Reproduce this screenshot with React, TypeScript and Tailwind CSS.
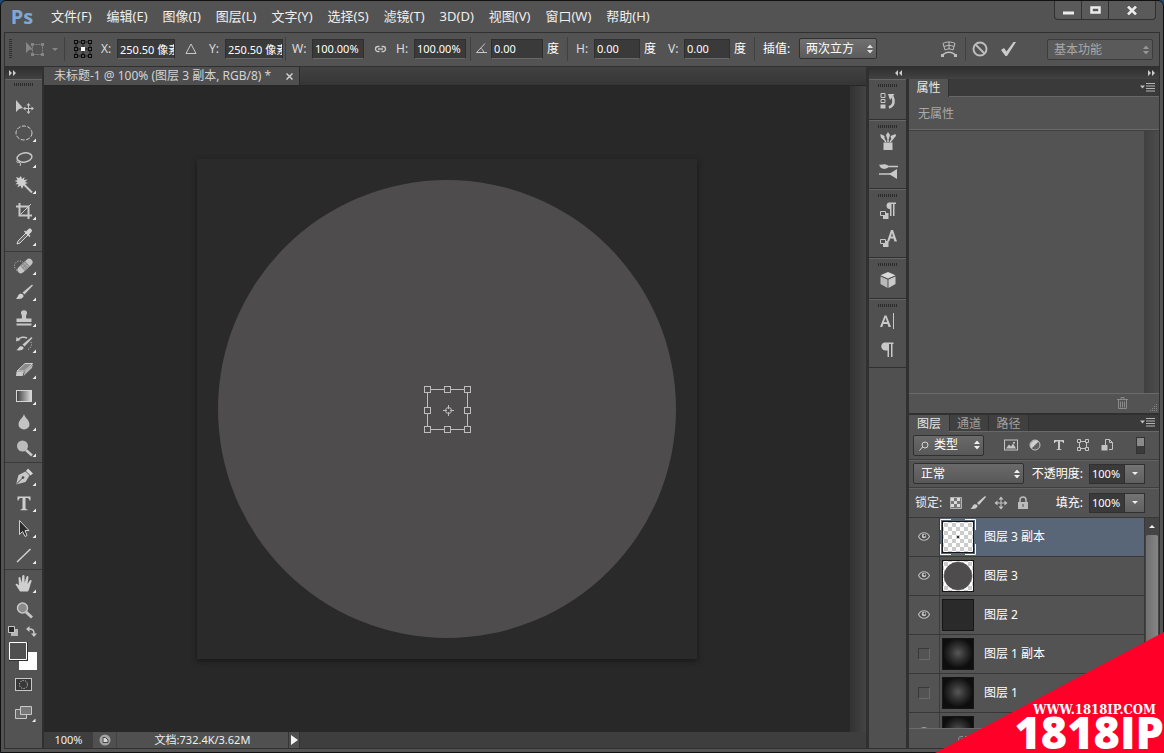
import { useState } from 'react';
import type { ReactNode } from 'react';
import clsx from 'clsx';

const MENUS = [
  '文件(F)',
  '编辑(E)',
  '图像(I)',
  '图层(L)',
  '文字(Y)',
  '选择(S)',
  '滤镜(T)',
  '3D(D)',
  '视图(V)',
  '窗口(W)',
  '帮助(H)',
];

type Tool = { name: string; icon: ReactNode; flyout?: boolean };

// Tool drawings share a 26x26 box, the flyout corner mark sits at its bottom right
const TOOL_GROUPS: Tool[][] = [
  [
    {
      name: '移动',
      flyout: false,
      icon: (
        <>
          <path d="M5 6v12l3-3 4-1z" fill="#c8c8c8" />
          <path d="M17.500 10v9M13 14.500h9" stroke="#c8c8c8" />
          <path d="M15.500 11.500l2-2.500 2 2.500zM15.500 17.500l2 2.500 2-2.500zM14.500 12.500L12 14.500l2.500 2zM20.500 12.500l2.500 2-2.500 2z" fill="#c8c8c8" />
        </>
      ),
    },
    {
      name: '椭圆选框',
      icon: <ellipse cx="13" cy="13" rx="8" ry="7" fill="none" stroke="#d0d0d0" strokeDasharray="4 1.500" />,
    },
    {
      name: '套索',
      icon: (
        <>
          <ellipse cx="13.500" cy="11.500" rx="7.500" ry="4.500" fill="none" stroke="#c8c8c8" strokeWidth="1.500" transform="rotate(-10 13.500 11.500)" />
          <path d="M7 14c-2 1-1.500 3 .5 2.500s1.500-2 0-2.500M8 16.500c2 .5 2 2 1 3.500" fill="none" stroke="#c8c8c8" />
        </>
      ),
    },
    {
      name: '魔棒',
      icon: (
        <>
          <path d="M10 4l1 3 2.500-2-.5 3 3.500-.5-2.500 2.500 3 1-3 1 1.500 3-3-1.500-1.500 3.500-1.500-3.500-3 2 1-3.500-3 .5 2-2.500-3-1 3-1-1.500-3 3 1z" fill="#cfcfcf" />
          <path d="M13.500 13l7.500 7.500" stroke="#c8c8c8" strokeWidth="2" />
        </>
      ),
    },
    {
      name: '裁剪',
      icon: (
        <>
          <path d="M8.500 5v12.500H21M5 8.500h12.500V21" fill="none" stroke="#c8c8c8" strokeWidth="2" />
          <path d="M9.500 16.500L20 6" stroke="#c8c8c8" />
        </>
      ),
    },
    {
      name: '吸管',
      icon: (
        <>
          <path d="M6 20l1-3 8-8 2 2-8 8z" fill="#686868" stroke="#d4d4d4" />
          <path d="M13 7.500l5.500 5.500 1-1-1.500-1.500 2.500-2.500c1.500-2-1-4.500-3-3L15 7.500 14 6.500z" fill="#d4d4d4" />
        </>
      ),
    },
  ],
  [
    {
      name: '修复画笔',
      icon: (
        <>
          <circle cx="8.500" cy="13" r="5" fill="none" stroke="#d0d0d0" strokeDasharray="1 1.600" />
          <g transform="rotate(-43 14 13)">
            <rect x="5" y="9.500" width="18" height="7" rx="3.500" fill="#c4c4c4" />
            <rect x="10.500" y="9.500" width="7" height="7" fill="#929292" />
            <path d="M12 11.500h1M15 11.500h1M12 14.500h1M15 14.500h1" stroke="#e2e2e2" />
          </g>
        </>
      ),
    },
    {
      name: '画笔',
      icon: (
        <>
          <path d="M21 5.500l1 1-8.500 9-2-2z" fill="#c8c8c8" />
          <path d="M4.500 19.500c2.500-.5 2-3 4-4.500 2-1 4.500.5 4 2.500-.8 2.500-5.500 3-8 2z" fill="#d0d0d0" />
        </>
      ),
    },
    {
      name: '图章',
      icon: (
        <path d="M5.500 18.500h15v2h-15zM5.500 13.500h5c1-1 .5-3-.5-5-1-4.500 7-4.500 6 0-1 2-1.500 4-.5 5h5V17h-15z" fill="#c8c8c8" />
      ),
    },
    {
      name: '历史记录画笔',
      icon: (
        <>
          <path d="M20.500 6l1 1-8 8.500-2-2z" fill="#c8c8c8" />
          <path d="M5 19c2.500-.5 2-2.500 4-3.500 2-.5 4 .5 3.500 2-1 2-5 2.500-7.500 1.500z" fill="#d0d0d0" />
          <path d="M7 9c2-3 6-3.500 9-2" fill="none" stroke="#c8c8c8" strokeWidth="1.500" />
          <path d="M5 10.500l.5-4.500 4 3z" fill="#c8c8c8" />
          <path d="M20 11c1 3 0 6-3 7.500" fill="none" stroke="#c8c8c8" strokeDasharray="1 1.500" />
        </>
      ),
    },
    {
      name: '橡皮擦',
      icon: (
        <>
          <path d="M6 14l8-7.500h7.500l-8 7.500z" fill="#8b8b8b" stroke="#d0d0d0" />
          <path d="M5.500 14.500H13l-1.500 4.500H5z" fill="#cacaca" />
          <path d="M14 14l8-7-1 4-8.500 8z" fill="#b4b4b4" />
        </>
      ),
    },
    {
      name: '渐变',
      icon: (
        <>
          <defs>
            <linearGradient id="toolGradient">
              <stop offset="0" stopColor="#3c3c3c" />
              <stop offset="1" stopColor="#dedede" />
            </linearGradient>
          </defs>
          <rect x="5.500" y="7.500" width="15" height="11" fill="url(#toolGradient)" stroke="#d5d5d5" />
        </>
      ),
    },
    {
      name: '模糊',
      icon: <path d="M13 5c1 4 5.500 6 5.500 10.500a5.500 5 0 0 1-11 0C7.500 11 12 9 13 5z" fill="#c4c4c4" />,
    },
    {
      name: '减淡',
      icon: (
        <>
          <circle cx="11.500" cy="11" r="5.500" fill="#bcbcbc" />
          <path d="M15 15l6 5.500" stroke="#c8c8c8" strokeWidth="2.500" />
        </>
      ),
    },
  ],
  [
    {
      name: '钢笔',
      icon: (
        <>
          <path d="M5 20.500l2.500-9.500 7-3.500 4 4-4 6.500z" fill="#c8c8c8" />
          <path d="M15 7l2-2.500 5 5-2.500 2z" fill="#d6d6d6" />
          <path d="M5 20.500l7-7" stroke="#4a4a4a" />
          <circle cx="12" cy="13.500" r="1.300" fill="#4a4a4a" />
        </>
      ),
    },
    {
      name: '文字',
      icon: (
        <path d="M6.500 6.500h13v4h-1c-.3-2-1-2.500-4-2.500v10c0 1 .6 1.300 2 1.500v.8h-7v-.8c1.400-.2 2-.5 2-1.500V8c-3 0-3.700.5-4 2.500h-1z" fill="#cfcfcf" />
      ),
    },
    {
      name: '路径选择',
      icon: <path d="M8.500 4.500v14l3-3 2.500 5 2-1-2-5h4z" fill="#2c2c2c" stroke="#d0d0d0" />,
    },
    { name: '直线', icon: <path d="M6 20L19.500 7" stroke="#cfcfcf" strokeWidth="1.500" /> },
  ],
  [
    {
      name: '抓手',
      icon: (
        <path d="M9 20.500c-1-2-2.500-4-4.500-7 .5-1.500 2-1 3.500 1L7.500 7c.2-1.500 1.800-1.500 2 0l1 5 .8-7c.4-1.500 2-1.300 2.200 0l.2 6.800 1.800-6c.5-1.300 2-.8 2 .5l-1 6.700 2.300-3.500c1-1 2.200-.3 1.700 1-1.500 3-1.500 7-3.500 10z" fill="#cfcfcf" />
      ),
    },
    {
      name: '缩放',
      flyout: false,
      icon: (
        <>
          <path d="M15 15l6 5.500" stroke="#c8c8c8" strokeWidth="3" />
          <circle cx="11.500" cy="11" r="5" fill="#8a8a8a" stroke="#c8c8c8" strokeWidth="1.500" />
        </>
      ),
    },
  ],
];

const DOCK_GROUPS: Tool[][] = [
  [
    {
      name: '历史记录',
      icon: (
        <>
          <path d="M6 5.500h4v4H6zM6 11.500h4v3H6z" fill="none" stroke="#c8c8c8" />
          <path d="M5.500 16.500h5v4h-5z" fill="#c8c8c8" />
          <path d="M14 19.500c5-2 5.500-6 3.500-11" fill="none" stroke="#c8c8c8" strokeWidth="2.500" />
          <path d="M13 6h6.500l-4.500 6z" fill="#c8c8c8" />
        </>
      ),
    },
  ],
  [
    {
      name: '画笔预设',
      icon: (
        <>
          <path d="M8.500 13.500h9V21h-9z" fill="#c8c8c8" />
          <path d="M11 13L7.500 8M13 13V7M15 13l4-5" stroke="#c8c8c8" strokeWidth="1.500" />
          <path d="M5.500 5l4 2v3.500C7 11 5 8 5.500 5zM13 3l2 3-1 3.500h-2L11 6zM15.500 7l5-2 .5 2-4.500 4z" fill="#c8c8c8" />
        </>
      ),
    },
    {
      name: '画笔',
      icon: (
        <>
          <path d="M11 9.500h12M4 17h12" stroke="#c8c8c8" strokeWidth="1.500" />
          <path d="M4 7.500c3 1 5-2 9 1v2c-4 3-8 1-9-3zM14 17l8-5v10z" fill="#c8c8c8" />
        </>
      ),
    },
  ],
  [
    {
      name: '段落样式',
      icon: (
        <>
          <path d="M21 4.500h-7c-3 0-3.500 6 0 6.500h1V18h1.500V6H18v12h1.500V6H21z" fill="#c8c8c8" />
          <path d="M8 15h5.500v6H8z" fill="#c8c8c8" />
          <path d="M5.500 13.500h5v4h-5z" fill="#505050" stroke="#c8c8c8" />
        </>
      ),
    },
    {
      name: '字符样式',
      icon: (
        <>
          <path d="M12 15.500L16 4h2l4 11.500h-2.500l-1-3h-3.300l-1 3zM16 10.500h2L17 7z" fill="#c8c8c8" />
          <path d="M8 15h5.500v6H8z" fill="#c8c8c8" />
          <path d="M5.500 13.500h5v4h-5z" fill="#505050" stroke="#c8c8c8" />
        </>
      ),
    },
  ],
  [
    {
      name: '3D',
      icon: (
        <>
          <path d="M13 5l7.500 3.300L13 11.500 5.500 8.300z" fill="#dadada" />
          <path d="M5.500 9.500l7 3v8.500l-7-4z" fill="#b9b9b9" />
          <path d="M20.500 9.500l-7 3v8.500l7-4z" fill="#cacaca" />
        </>
      ),
    },
  ],
  [
    {
      name: '字符',
      icon: (
        <>
          <path d="M5 19L9.500 7.500h2L16 19h-2.500l-1-3H8.300l-1 3zM9 14h3l-1.500-4.300z" fill="#c8c8c8" />
          <path d="M18.500 5v16" stroke="#c8c8c8" />
        </>
      ),
    },
    {
      name: '段落',
      icon: <path d="M18.500 6.500H10c-5 0-5 7.500 0 8h2.500V21H14V8h2v13h1.500V8h1z" fill="#c8c8c8" />,
    },
  ],
];

const LAYERS = [
  { name: '图层 3 副本', visible: true, thumb: 'dot' },
  { name: '图层 3', visible: true, thumb: 'circle' },
  { name: '图层 2', visible: true, thumb: 'solid' },
  { name: '图层 1 副本', visible: false, thumb: 'glow' },
  { name: '图层 1', visible: false, thumb: 'glow' },
  { name: '', visible: true, thumb: 'glow' },
];

function Grip() {
  return (
    <svg width="20" height="3" className="mx-auto" aria-hidden="true">
      <path d="M0 1.500h20" stroke="#2b2b2b" strokeWidth="3" strokeDasharray="1 1" />
    </svg>
  );
}

function DoubleArrow({ left = false }: { left?: boolean }) {
  return (
    <svg width="9" height="6" viewBox="0 0 9 6" fill="#cccccc" className={clsx(left && 'rotate-180')} aria-hidden="true">
      <path d="M1 0l3 3-3 3zM5 0l3 3-3 3z" />
    </svg>
  );
}

function UpDown() {
  return (
    <svg
      width="6"
      height="9"
      viewBox="0 0 6 9"
      fill="currentColor"
      className="pointer-events-none absolute top-1/2 right-1 -translate-y-1/2"
      aria-hidden="true"
    >
      <path d="M0 3.500L3 0l3 3.500zM0 5.500h6L3 9z" />
    </svg>
  );
}

function PanelMenu() {
  return (
    <button aria-label="面板菜单" className="mr-0.5 ml-auto flex w-5 items-center justify-center">
      <svg width="15" height="9" viewBox="0 0 15 9" aria-hidden="true">
        <path d="M0 2.500h5L2.500 5.500z" fill="#c0c0c0" />
        <path d="M6 .5h9M6 3h9M6 5.500h9M6 8h9" stroke="#b4b4b4" />
      </svg>
    </button>
  );
}

function ToolButton({ tool, size }: { tool: Tool; size: string }) {
  return (
    <button aria-label={tool.name} className={clsx('flex w-full items-center justify-center', size)}>
      <svg width="26" height="26" viewBox="0 0 26 26" aria-hidden="true">
        {tool.icon}
        {size === 'h-[26px]' && tool.flyout !== false && <path d="M25 18.500v3.500h-3.500z" fill="#f0f0f0" />}
      </svg>
    </button>
  );
}

type FieldProps = { id: string; label: ReactNode; value: string; labelClass: string; inputClass: string; unit?: string };

function Field({ id, label, value, labelClass, inputClass, unit }: FieldProps) {
  return (
    <div className="flex items-center">
      <label htmlFor={id} className={labelClass}>
        {label}
      </label>
      <input
        id={id}
        defaultValue={value}
        className={clsx('h-5 border border-[#2f2f2f] border-b-[#686868] bg-[#3a3a3a] pl-0.5 text-[11px] text-white outline-none', inputClass)}
      />
      {unit && <span className="ml-1 text-xs text-white">{unit}</span>}
    </div>
  );
}

function Divider() {
  return <div className="h-6 w-px bg-[#404040]" />;
}

function TitleBar() {
  return (
    <header className="flex h-[31px] shrink-0 items-center">
      <span className="ml-1.5 w-6 text-center font-['Open_Sans'] text-xl font-bold text-[#7fa9d4]">Ps</span>
      <nav className="ml-[17px] flex gap-[15px] text-[13px] text-[#efefef]">
        {MENUS.map((m) => (
          <button key={m}>{m}</button>
        ))}
      </nav>
      <div className="mr-1 ml-auto flex h-[19px] self-start rounded-b border border-t-0 border-[#303030] bg-[#5a5a5a]">
        <button aria-label="最小化" className="flex w-[27px] items-center justify-center border-r border-[#303030]">
          <svg width="11" height="12">
            <path d="M0 9h11" stroke="#ececec" strokeWidth="3" />
          </svg>
        </button>
        <button aria-label="最大化" className="flex w-[27px] items-center justify-center border-r border-[#303030]">
          <svg width="11" height="9">
            <rect x="1.500" y="1.500" width="8" height="5" fill="none" stroke="#ececec" strokeWidth="2.500" />
          </svg>
        </button>
        <button aria-label="关闭" className="flex w-[46px] items-center justify-center">
          <svg width="10" height="9">
            <path d="M1 .5l8 8M9 .5l-8 8" stroke="#ececec" strokeWidth="2.500" />
          </svg>
        </button>
      </div>
    </header>
  );
}

function OptionsBar() {
  return (
    <section aria-label="选项" className="flex h-[34px] shrink-0 items-center border-b border-[#303030] pb-0.5 pl-1 text-xs text-[#dcdcdc]">
      <svg width="3" height="20" className="shrink-0">
        <path d="M1.500 0v20" stroke="#303030" strokeWidth="3" strokeDasharray="1 1" />
      </svg>
      <button aria-label="变换工具" className="ml-3.5 flex items-center">
        <svg width="38" height="16" viewBox="0 0 38 16">
          <path d="M0 1v11l3-3 4-.5z" fill="#858585" />
          <rect x="6.500" y="3.500" width="10" height="10" fill="none" stroke="#858585" strokeDasharray="2 1" />
          <path d="M5 2h3v3H5zM15 2h3v3h-3zM15 12h3v3h-3zM5 12h3v3H5z" fill="#858585" />
          <path d="M26 7h6l-3 3z" fill="#858585" />
        </svg>
      </button>
      <Divider />
      <button aria-label="参考点" className="ml-2 shrink-0">
        <svg width="20" height="20" viewBox="0 0 20 20">
          <path d="M3 3h14v14H3zM10 3v14M3 10h14" fill="none" stroke="#1b1b1b" />
          {[1, 8, 15].map((y) =>
            [1, 8, 15].map((x) => (
              <rect
                key={`${x}-${y}`}
                x={x + 0.5}
                y={y + 0.5}
                width="3"
                height="3"
                fill={x === 8 && y === 8 ? '#ffffff' : '#535353'}
                stroke={x === 8 && y === 8 ? '#ffffff' : '#0c0c0c'}
              />
            )),
          )}
        </svg>
      </button>
      <div className="ml-2">
        <Field id="pos-x" label="X:" value="250.50 像素" labelClass="w-4" inputClass="w-[58px]" />
      </div>
      <button aria-label="相对定位" className="ml-2 flex w-4 justify-center">
        <svg width="12" height="11" viewBox="0 0 12 11">
          <path d="M6 1l5 9.500H1z" fill="none" stroke="#c8c8c8" />
        </svg>
      </button>
      <div className="mr-0.5 ml-2.5">
        <Field id="pos-y" label="Y:" value="250.50 像素" labelClass="w-4" inputClass="w-[58px]" />
      </div>
      <Divider />
      <div className="ml-1.5">
        <Field id="scale-w" label="W:" value="100.00%" labelClass="w-5" inputClass="w-[52px]" />
      </div>
      <button aria-label="保持长宽比" className="ml-2 flex w-4 justify-center">
        <svg width="13" height="8" viewBox="0 0 13 8" fill="none" stroke="#c8c8c8" strokeWidth="1.300">
          <path d="M5.500 1.500H4a2.500 2.500 0 0 0 0 5h1.500M7.500 1.500H9a2.500 2.500 0 0 1 0 5H7.500M4 4h5" />
        </svg>
      </button>
      <div className="mr-1 ml-2">
        <Field id="scale-h" label="H:" value="100.00%" labelClass="w-[18px]" inputClass="w-[52px]" />
      </div>
      <Divider />
      <div className="mr-2 ml-1">
        <Field
          id="rotate"
          label={
            <svg width="12" height="11" viewBox="0 0 12 11" fill="none" stroke="#c8c8c8" aria-label="旋转">
              <path d="M10 .5L1.500 9.500H12M5 5.500c2 0 3.500 1.500 3.500 4" />
            </svg>
          }
          value="0.00"
          labelClass="w-4"
          inputClass="w-[52px]"
          unit="度"
        />
      </div>
      <Divider />
      <div className="ml-2">
        <Field id="skew-h" label="H:" value="0.00" labelClass="w-[18px]" inputClass="w-[46px]" unit="度" />
      </div>
      <div className="mr-2 ml-3">
        <Field id="skew-v" label="V:" value="0.00" labelClass="w-4" inputClass="w-[46px]" unit="度" />
      </div>
      <Divider />
      <label htmlFor="interpolation" className="ml-2 w-9 shrink-0 text-white">
        插值:
      </label>
      <div className="relative text-[#e0e0e0]">
        <select
          id="interpolation"
          className="h-[21px] w-[78px] appearance-none rounded-xs border border-[#303030] bg-linear-to-b from-[#707070] to-[#5c5c5c] pl-1.5 text-xs text-white"
        >
          <option>两次立方</option>
        </select>
        <UpDown />
      </div>
      <button aria-label="变形模式" className="mr-2 ml-auto">
        <svg width="16" height="16" viewBox="0 0 16 16" fill="none" stroke="#bdbdbd">
          <path d="M2 2.500c3-2 9-2 12 0l-2 6.500c-3-1.500-5-1.500-8 0zM8 1v7M3 5.500c4-1.500 6-1.500 10 0" />
          <path d="M1.500 14.500c3-4.500 10-4.500 13 0" strokeWidth="1.500" />
          <path d="M0 13h3v3H0zM13 13h3v3h-3z" fill="#bdbdbd" stroke="none" />
        </svg>
      </button>
      <Divider />
      <button aria-label="取消变换" className="ml-1.5">
        <svg width="16" height="16" viewBox="0 0 16 16" fill="none" stroke="#bdbdbd" strokeWidth="2">
          <circle cx="8" cy="8" r="6.500" />
          <path d="M3.500 3.500l9 9" />
        </svg>
      </button>
      <button aria-label="提交变换" className="ml-3">
        <svg width="17" height="16" viewBox="0 0 17 16">
          <path d="M1 9l3-2 2.500 3.500L13.500 1H16L7 15H5.500z" fill="#cbcbcb" />
        </svg>
      </button>
      <div className="relative mt-0.5 mr-1.5 ml-[30px] text-[#989898]">
        <select
          aria-label="工作区"
          className="h-[21px] w-[106px] appearance-none rounded-xs border border-[#3c3c3c] bg-[#5a5a5a] pl-1.5 text-xs text-[#a8a8a8]"
        >
          <option>基本功能</option>
        </select>
        <UpDown />
      </div>
    </section>
  );
}

function Toolbar() {
  return (
    <aside aria-label="工具" className="flex w-[37px] shrink-0 flex-col">
      <button aria-label="展开工具栏" className="flex h-3 shrink-0 items-center bg-linear-to-b from-[#2f2f2f] to-[#424242] pl-[3px]">
        <DoubleArrow />
      </button>
      <div className="flex h-[15px] shrink-0 items-start border-t border-[#666666] pt-[3px]">
        <Grip />
      </div>
      {TOOL_GROUPS.map((group, i) => (
        <div key={group[0].name} className={clsx(i > 0 && 'mt-px border-t border-[#3a3a3a] pt-px')}>
          {group.map((tool) => (
            <ToolButton key={tool.name} tool={tool} size="h-[26px]" />
          ))}
        </div>
      ))}
      <div className="mt-[3px] flex justify-between pr-[5px] pl-[3px]">
        <button aria-label="默认颜色">
          <svg width="11" height="11">
            <path d="M3 3h7v7H3z" fill="#b5b5b5" />
            <path d="M.5.5h6v6h-6z" fill="#2a2a2a" stroke="#c8c8c8" />
          </svg>
        </button>
        <button aria-label="切换颜色">
          <svg width="11" height="11" viewBox="0 0 11 11">
            <path d="M3 3c4 0 5 1 5 5" fill="none" stroke="#c8c8c8" strokeWidth="1.500" />
            <path d="M0 3l3.500-3v6zM5 7.500h6L8 11z" fill="#c8c8c8" />
          </svg>
        </button>
      </div>
      <button aria-label="前景色和背景色" className="mt-[5px] ml-1 h-7 w-7">
        <svg width="28" height="28">
          <path d="M10 10h18v18H10z" fill="#ffffff" />
          <path d="M0 0h19v19H0z" fill="#303030" />
          <path d="M.5.500h17v17H.500z" fill="#505050" stroke="#ffffff" />
        </svg>
      </button>
      <button aria-label="快速蒙版" className="mt-2 flex justify-center">
        <svg width="18" height="14">
          <rect x=".5" y=".5" width="16" height="12" fill="#383838" stroke="#c8c8c8" />
          <circle cx="8.500" cy="6.500" r="4" fill="none" stroke="#ececec" strokeDasharray="1 1.500" />
        </svg>
      </button>
      <button aria-label="屏幕模式" className="mt-[14px] flex justify-center">
        <svg width="24" height="18" viewBox="-3 0 24 18">
          <path d="M.5 3.500h11v9H.5z" fill="#686868" stroke="#c8c8c8" />
          <path d="M5.500.500h11v8h-11z" fill="#777777" stroke="#c8c8c8" />
          <path d="M20.500 12.500V16H17z" fill="#f0f0f0" />
        </svg>
      </button>
    </aside>
  );
}

function TransformBox() {
  const xs = [230.5, 250.5, 270.5];
  const ys = [230.5, 251.5, 270.5];
  return (
    <g fill="none" stroke="#bdbdbd">
      <rect x="230.500" y="230.500" width="40" height="40" />
      {ys.map((y, row) =>
        xs.map((x, col) =>
          row === 1 && col === 1 ? null : <rect key={`${x}-${y}`} x={x - 3} y={y - 3} width="6" height="6" fill="#4f4c4d" />,
        ),
      )}
      <circle cx="251.500" cy="251.500" r="3" />
      <path d="M251.500 246v4M251.500 253v4M246 251.500h4M253 251.500h4" />
    </g>
  );
}

function DocumentWindow() {
  return (
    <main className="flex min-w-0 flex-1 flex-col border-r-3 border-l-2 border-[#303030] bg-[#282828]">
      <div className="flex h-[19px] shrink-0 border-b border-[#262626] bg-linear-to-b from-[#424242] to-[#353535]">
        <div className="flex w-64 items-center justify-between border-r border-[#2a2a2a] bg-[#4f4f4f] pr-1.5 pl-2.5 text-xs whitespace-nowrap text-[#d4d4d4]">
          <span>未标题-1 @ 100% (图层 3 副本, RGB/8) *</span>
          <button aria-label="关闭文档">
            <svg width="7" height="7">
              <path d="M.5.500l6 6M6.500.500l-6 6" stroke="#cfcfcf" strokeWidth="1.500" />
            </svg>
          </button>
        </div>
      </div>
      <div className="flex min-h-0 flex-1">
        <div className="flex min-w-0 flex-1 items-center justify-center overflow-hidden">
          <svg width="500" height="500" className="shrink-0 bg-[#2a2a2a] shadow-[0_2px_5px_#171717]" role="img" aria-label="画布">
            <circle cx="250" cy="250" r="229" fill="#4f4c4d" />
            <TransformBox />
          </svg>
        </div>
        <div className="w-4 bg-linear-to-r from-[#323232] to-[#444444]" />
      </div>
      <footer className="flex h-4 shrink-0 bg-[#3e3e3e] text-[11px] text-[#f0f0f0]">
        <div className="flex w-[49px] items-center justify-center">100%</div>
        <button aria-label="联机" className="flex w-6 items-center justify-center border-r border-[#424242] bg-[#505050]">
          <svg width="12" height="12">
            <circle cx="6" cy="6" r="5.500" fill="#a4a4a4" />
            <path d="M4 3.500h2.500L9 6v2.500H4z" fill="#d8d8d8" stroke="#464646" />
          </svg>
        </button>
        <div className="flex w-[171px] items-center justify-center bg-[#505050]">文档:732.4K/3.62M</div>
        <button aria-label="状态菜单" className="flex w-3 items-center justify-center border-x border-[#353535] bg-[#505050]">
          <svg width="7" height="10">
            <path d="M0 0l7 5-7 5z" fill="#f4f4f4" />
          </svg>
        </button>
      </footer>
    </main>
  );
}

function Dock() {
  return (
    <div className="w-[37px] shrink-0 bg-[#505050]">
      {DOCK_GROUPS.map((group) => (
        <div key={group[0].name} className="border-t border-b border-t-[#666666] border-b-[#303030] pt-1 pb-1">
          <Grip />
          {group.map((tool) => (
            <ToolButton key={tool.name} tool={tool} size="h-7" />
          ))}
        </div>
      ))}
    </div>
  );
}

function PropertiesPanel() {
  return (
    <section aria-label="属性" className="flex min-h-0 flex-1 flex-col">
      <div className="flex h-[18px] shrink-0 border-b border-[#686868] bg-[#3a3a3a]">
        <h2 className="-mb-px w-10 border-r border-[#303030] bg-[#535353] text-center text-xs leading-[18px] text-[#e8e8e8]">属性</h2>
        <PanelMenu />
      </div>
      <p className="h-[33px] shrink-0 border-b border-[#6a6a6a] pl-[9px] text-xs leading-[34px] text-[#a8a8a8]">无属性</p>
      <div className="flex flex-1 justify-end border-t border-[#404040]">
        <div className="w-[15px] bg-linear-to-r from-[#404040] to-[#4c4c4c]" />
      </div>
      <div className="flex h-5 shrink-0 items-center justify-end gap-5 border-t border-[#6a6a6a]">
        <button aria-label="删除">
          <svg width="11" height="12" viewBox="0 0 11 12" fill="none" stroke="#8a8a8a">
            <path d="M0 2.500h11M4 2V.5h3V2M1.500 3v8.500h8V3M3.500 4.500v6M5.500 4.500v6M7.500 4.500v6" />
          </svg>
        </button>
        <svg width="11" height="11" className="self-end" aria-hidden="true">
          <path d="M8 2.500h2M6 4.500h4M4 6.500h6M2 8.500h8" stroke="#858585" strokeDasharray="1 1" />
        </svg>
      </div>
    </section>
  );
}

function Eye() {
  return (
    <svg width="12" height="9" viewBox="0 0 12 9" aria-hidden="true">
      <path d="M.5 4.500C3-.5 9-.5 11.500 4.500 9 9.500 3 9.500.5 4.500z" fill="#4a4a4a" stroke="#bdbdbd" strokeWidth="1.200" />
      <circle cx="6" cy="4" r="2.300" fill="#c4c4c4" />
      <circle cx="6.500" cy="3.500" r="1" fill="#2f2f2f" />
    </svg>
  );
}

function Thumb({ kind, selected }: { kind: string; selected: boolean }) {
  const clear = kind === 'dot' || kind === 'circle';
  return (
    <svg width="36" height="36" viewBox="0 0 36 36" className="shrink-0" aria-hidden="true">
      <defs>
        <pattern id="checker" width="8" height="8" patternUnits="userSpaceOnUse">
          <path d="M0 0h8v8H0z" fill="#ffffff" />
          <path d="M0 0h4v4H0zM4 4h4v4H4z" fill="#cccccc" />
        </pattern>
        <radialGradient id="glow">
          <stop offset="0" stopColor="#585858" />
          <stop offset=".5" stopColor="#303030" />
          <stop offset="1" stopColor="#0e0e0e" />
        </radialGradient>
      </defs>
      <rect x="2.500" y="2.500" width="31" height="31" fill={clear ? 'url(#checker)' : kind === 'glow' ? '#0e0e0e' : '#2a2a2a'} stroke="#161616" />
      {kind === 'glow' && <circle cx="18" cy="17" r="15" fill="url(#glow)" />}
      {kind === 'circle' && <circle cx="18" cy="18" r="14" fill="#4f4c4d" />}
      {kind === 'dot' && <path d="M17 17h2v2h-2z" fill="#333333" />}
      {selected && (
        <path d="M.5 11V.5H11M25 .5h10.500V11M35.500 25v10.500H25M11 35.500H.5V25" fill="none" stroke="#ffffff" />
      )}
    </svg>
  );
}

function PercentField({ id, label }: { id: string; label: string }) {
  return (
    <div className="ml-auto flex items-center text-xs text-white">
      <label htmlFor={id} className="mr-1.5">
        {label}
      </label>
      <input id={id} defaultValue="100%" className="h-5 w-9 border border-[#303030] bg-[#3a3a3a] pl-0.5 text-[11px] text-white outline-none" />
      <button
        aria-label={`${label} 滑块`}
        className="flex h-5 w-5 items-center justify-center border border-l-0 border-[#303030] bg-linear-to-b from-[#747474] to-[#5f5f5f]"
      >
        <svg width="6" height="3">
          <path d="M0 0h6L3 3z" fill="#f0f0f0" />
        </svg>
      </button>
    </div>
  );
}

function LayersPanel() {
  const [selected, setSelected] = useState(0);
  const [hidden, setHidden] = useState<boolean[]>(LAYERS.map((l) => !l.visible));

  const toggle = (index: number) => {
    setHidden(hidden.map((h, i) => (i === index ? !h : h)));
  };

  return (
    <section aria-label="图层" className="flex min-h-0 flex-1 flex-col text-xs">
      <div className="flex h-[17px] shrink-0 border-b border-[#686868] bg-[#3a3a3a] leading-[17px]">
        <button className="-mb-px w-10 bg-[#535353] text-[#e8e8e8]">图层</button>
        <button className="w-10 border-x border-[#303030] bg-[#404040] text-[#a0a0a0]">通道</button>
        <button className="w-10 border-r border-[#303030] bg-[#404040] text-[#a0a0a0]">路径</button>
        <PanelMenu />
      </div>
      <div className="flex h-7 shrink-0 items-center border-b border-[#3e3e3e] pr-3.5 pl-1">
        <div className="relative text-[#f0f0f0]">
          <svg width="11" height="11" viewBox="0 0 11 11" className="pointer-events-none absolute top-1.5 left-1.5" fill="none" stroke="#d8d8d8">
            <circle cx="6" cy="4" r="3" />
            <path d="M3.500 6L.5 9.500" />
          </svg>
          <select
            aria-label="过滤类型"
            className="h-[21px] w-[71px] appearance-none rounded-xs border border-[#303030] bg-linear-to-b from-[#6a6a6a] to-[#585858] pl-5 text-xs text-white"
          >
            <option>类型</option>
          </select>
          <UpDown />
        </div>
        <div className="ml-5 flex items-center gap-2.5">
          <button aria-label="像素图层">
            <svg width="14" height="14" viewBox="0 0 14 14">
              <rect x=".5" y="2" width="13" height="10" fill="none" stroke="#c4c4c4" />
              <path d="M2 10.500l3-4 2 2 2-3 3 5zM9 4h2v1.500H9z" fill="#c4c4c4" />
            </svg>
          </button>
          <button aria-label="调整图层">
            <svg width="14" height="14" viewBox="0 0 14 14">
              <circle cx="7" cy="7" r="5" fill="#606060" stroke="#c4c4c4" />
              <path d="M3.500 10.500a5 5 0 0 1 7-7z" fill="#d0d0d0" />
            </svg>
          </button>
          <button aria-label="文字图层">
            <svg width="14" height="14" viewBox="0 0 14 14">
              <path d="M2 2h10v3h-1c0-1-.5-1.500-3-1.500V11l1.500.5v.5h-5v-.5L6 11V3.500C3.500 3.500 3 4 3 5H2z" fill="#c8c8c8" />
            </svg>
          </button>
          <button aria-label="形状图层">
            <svg width="14" height="14" viewBox="0 0 14 14" fill="none" stroke="#c4c4c4">
              <path d="M4 3.500h6M4 10.500h6M3.500 4v6M10.500 4v6M1.500 1.500h3v3h-3zM9.500 1.500h3v3h-3zM9.500 9.500h3v3h-3zM1.500 9.500h3v3h-3z" />
            </svg>
          </button>
          <button aria-label="智能对象">
            <svg width="14" height="14" viewBox="0 0 14 14">
              <path d="M5.500 7V1.500h4l3 3v7H9M9.500 1.500v3h3" fill="none" stroke="#c4c4c4" />
              <path d="M1.500 7h6v5.500h-6z" fill="#c4c4c4" />
            </svg>
          </button>
        </div>
        <button aria-label="打开过滤" className="ml-auto flex h-[17px] w-[9px] border border-[#333333] bg-[#3a3a3a]">
          <span className="h-2 w-full bg-[#8a8a8a]" />
        </button>
      </div>
      <div className="flex h-7 shrink-0 items-center border-t border-b border-t-[#626262] border-b-[#3e3e3e] pr-3.5 pl-1">
        <div className="relative text-[#f0f0f0]">
          <select
            aria-label="混合模式"
            className="h-[21px] w-[111px] appearance-none rounded-xs border border-[#303030] bg-linear-to-b from-[#6a6a6a] to-[#585858] pl-[7px] text-xs text-white"
          >
            <option>正常</option>
          </select>
          <UpDown />
        </div>
        <PercentField id="opacity" label="不透明度:" />
      </div>
      <div className="flex h-[29px] shrink-0 items-center border-t border-[#626262] pr-3.5 pl-1.5">
        <span className="text-[#ececec]">锁定:</span>
        <div className="ml-2 flex items-center gap-2">
          <button aria-label="锁定透明像素">
            <svg width="12" height="12" viewBox="0 0 12 12">
              <path d="M.5.500h11v11H.5z" fill="#777777" stroke="#b4b4b4" />
              <path d="M1 1h3v3H1zM7 1h3v3H7zM4 4h3v3H4zM1 7h3v3H1zM7 7h3v3H7z" fill="#dadada" />
            </svg>
          </button>
          <button aria-label="锁定图像像素">
            <svg width="16" height="14" viewBox="0 0 16 14">
              <path d="M15 0l1 1-7 8-2-2z" fill="#cccccc" />
              <path d="M0 12.500c3-.5 2-3 4-4 2-.5 4 .5 3.500 2-1 2.500-5 3-7.500 2z" fill="#cccccc" />
            </svg>
          </button>
          <button aria-label="锁定位置">
            <svg width="14" height="14" viewBox="0 0 14 14">
              <path d="M7 2v10M2 7h10" stroke="#c4c4c4" />
              <path d="M4.500 3.500L7 .5l2.500 3zM4.500 10.500l2.500 3 2.500-3zM3.500 4.500L.5 7l3 2.500zM10.500 4.500l3 2.500-3 2.500z" fill="#c4c4c4" />
            </svg>
          </button>
          <button aria-label="锁定全部">
            <svg width="14" height="14" viewBox="0 0 14 14">
              <path d="M4 6V4a3 3 0 0 1 6 0v2" fill="none" stroke="#bcbcbc" strokeWidth="1.500" />
              <path d="M2 6h10v7H2z" fill="#bcbcbc" />
              <path d="M7 8v3" stroke="#505050" />
            </svg>
          </button>
        </div>
        <PercentField id="fill" label="填充:" />
      </div>
      <div className="flex min-h-0 flex-1 overflow-hidden border-t border-[#383838]">
        <ul className="min-w-0 flex-1">
          {LAYERS.map((layer, i) => (
            <li key={i} className="flex h-[39px] border-b border-[#383838]">
              <button
                aria-label={`切换 ${layer.name}`}
                onClick={() => toggle(i)}
                className="flex w-[31px] items-center justify-center border-r border-[#3c3c3c]"
              >
                {hidden[i] ? <span className="h-3 w-3 border border-[#393939] border-r-[#6a6a6a] border-b-[#6a6a6a]" /> : <Eye />}
              </button>
              <button
                onClick={() => setSelected(i)}
                className={clsx('flex flex-1 items-center gap-2 text-white', selected === i && 'bg-[#596678]')}
              >
                <Thumb kind={layer.thumb} selected={selected === i} />
                {layer.name}
              </button>
            </li>
          ))}
        </ul>
        <div className="w-[15px] border-l border-[#383838] bg-[#444444] pt-1.5">
          <svg width="14" height="11" aria-hidden="true">
            <path d="M4 4h6L7 1z" fill="#f0f0f0" />
          </svg>
          <div className="mx-px h-44 rounded-t-xs bg-linear-to-r from-[#707070] to-[#858585]" />
        </div>
      </div>
      <footer className="flex h-5 shrink-0 items-center border-t border-[#6a6a6a] pl-12">
        <button aria-label="链接图层">
          <svg width="14" height="8" viewBox="0 0 14 8" fill="none" stroke="#8c8c8c">
            <path d="M6 1.500H4a2.500 2.500 0 0 0 0 5h2M8 1.500h2a2.500 2.500 0 0 1 0 5H8M4 4h6" />
          </svg>
        </button>
      </footer>
    </section>
  );
}

function RightSide() {
  return (
    <div className="flex w-[290px] shrink-0 flex-col bg-[#535353]">
      <div className="flex h-3 shrink-0 items-center bg-linear-to-b from-[#2f2f2f] to-[#424242]">
        <button aria-label="展开面板" className="flex w-[37px] justify-end pr-[3px]">
          <DoubleArrow left />
        </button>
        <button aria-label="折叠面板" className="mr-[3px] ml-auto">
          <DoubleArrow />
        </button>
      </div>
      <div className="flex min-h-0 flex-1">
        <Dock />
        <div className="flex min-w-0 flex-1 flex-col gap-0.5 border-l-3 border-[#303030] bg-[#303030]">
          <div className="flex min-h-0 flex-1 bg-[#535353] *:min-w-0">
            <PropertiesPanel />
          </div>
          <div className="flex min-h-0 flex-1 bg-[#535353] *:min-w-0">
            <LayersPanel />
          </div>
        </div>
      </div>
    </div>
  );
}

function Watermark() {
  return (
    <div className="pointer-events-none absolute right-0 bottom-0 h-[121px] w-[229px] overflow-hidden text-white">
      <svg width="229" height="121" className="absolute inset-0" aria-hidden="true">
        <path d="M229 0v121H0z" fill="#ff0029" />
      </svg>
      <div className="relative flex h-full flex-col items-end justify-end pb-1.5">
        <span className="mr-2 font-['DejaVu_Serif_Condensed','DejaVu_Serif',serif] text-[13px] leading-3 font-bold">WWW.1818IP.COM</span>
        <span className="font-['Open_Sans',sans-serif] text-[45px] leading-[31px] font-extrabold">1818IP</span>
      </div>
    </div>
  );
}

export default function App() {
  return (
    <div className="h-screen bg-[#1d4a76]">
      <div className="relative flex h-full flex-col overflow-hidden rounded-t-md border border-[#111111] bg-[#535353] px-[3px] pb-[3px] font-['Noto_Sans','Noto_Sans_CJK_SC',sans-serif]">
        <TitleBar />
        <div className="flex min-h-0 flex-1 flex-col border border-[#303030]">
          <OptionsBar />
          <div className="flex min-h-0 flex-1">
            <Toolbar />
            <DocumentWindow />
            <RightSide />
          </div>
        </div>
      </div>
      <Watermark />
    </div>
  );
}
